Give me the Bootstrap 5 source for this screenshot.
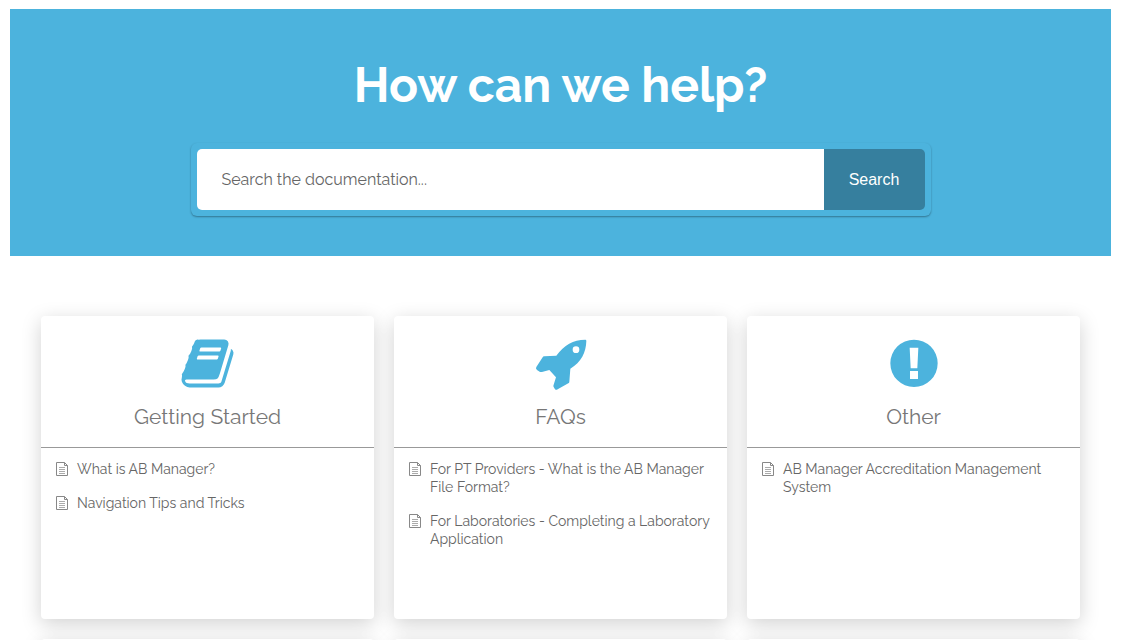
<!DOCTYPE html>
<html lang="en">
<head>
<meta charset="utf-8">
<meta name="viewport" content="width=device-width, initial-scale=1">
<title>How can we help?</title>
<link rel="stylesheet" href="https://cdn.jsdelivr.net/npm/bootstrap@5.3.0/dist/css/bootstrap.min.css">
<style>
:root { --kb-blue: #4cb3dd; --kb-teal: #367f9e; }
body { font-family: Raleway, Lato, sans-serif; color: #666; overflow-x: hidden; }
.kb-hero { background: var(--kb-blue); margin: 9px 11px 0 10px; padding: 46px 16px 40px; }
.kb-hero h1 { font-size: 48px; line-height: 60px; font-weight: 700; margin-bottom: 28px; }
.kb-search { max-width: 740px; padding: 6px; border-radius: 6px; box-shadow: 0 1px 2px rgba(0,0,0,.35); }
.kb-search .form-control { height: 61px; padding: 0 25px; border: 0; border-radius: 5px 0 0 5px; font-size: 16px; color: #666; }
.kb-search .form-control::placeholder { color: #666; opacity: 1; }
.kb-search .btn { width: 101px; border: 0; border-radius: 0 5px 5px 0; background: var(--kb-teal); color: #fff; font: 16px "Liberation Sans", sans-serif; }
.kb-grid { padding: 60px 42px 20px 41px; display: grid; grid-template-columns: repeat(3, minmax(0, 1fr)); gap: 20px; }
.kb-card { min-height: 303px; background: #fff; border-radius: 4px; box-shadow: 0 5px 20px rgba(0,0,0,.18); }
.kb-head { padding: 20px 16px 16px; border-bottom: 1px solid #999; }
.kb-head svg { width: 56px; height: 56px; fill: var(--kb-blue); }
.kb-head h2 { font-size: 21px; line-height: 28px; font-weight: 400; margin: 11px 0 0; color: #777; }
.kb-list { padding: 12px 14px; font-size: 14px; line-height: 18px; }
.kb-list a { color: #666; }
.kb-list svg { width: 14px; height: 14px; margin-top: 2px; fill: none; stroke: #888; }
@media (max-width: 767px) { .kb-grid { grid-template-columns: 1fr; padding: 32px 16px; } }
</style>
</head>
<body>
<svg class="d-none" aria-hidden="true">
  <symbol id="doc" viewBox="0 0 14 14"><path d="M1.500.5h8l3 3v10h-11zM9.500.5v3h3"/><path d="M4 5.500h6M4 7.500h6M4 9.500h6M4 11.500h6" stroke-opacity=".7"/></symbol>
</svg>
<header class="kb-hero text-center text-white">
  <h1>How can we help?</h1>
  <form class="kb-search d-flex mx-auto" role="search">
    <input class="form-control" type="search" placeholder="Search the documentation..." aria-label="Search the documentation">
    <button class="btn flex-shrink-0" type="submit">Search</button>
  </form>
</header>
<main class="kb-grid">
  <section class="kb-card">
    <div class="kb-head text-center">
      <svg class="d-block mx-auto" viewBox="-48 16 1792 1792" aria-hidden="true"><path d="M1639 478q40 57 18 129l-275 906q-19 64-76.500 107.500t-122.500 43.500h-923q-77 0-148.500-53.500t-99.500-131.500q-24-67-2-127 0-4 3-27t4-37q1-8-3-21.500t-3-19.500q2-11 8-21t16.500-23.500 16.500-23.500q23-38 45-91.500t30-91.500q3-10 .5-30t-.5-28q3-11 17-28t17-23q21-36 42-92t25-90q1-9-2.500-32t.5-28q4-13 22-30.500t22-22.500q19-26 42.500-84.500t27.500-96.500q1-8-3-25.500t-2-26.500q2-8 9-18t18-23 17-21q8-12 16.500-30.500t15-35 16-36 19.500-32 26.500-23.500 36-11.500 47.500 5.500l-1 3q38-9 51-9h761q74 0 114 56t18 130l-274 906q-36 119-71.500 153.500t-128.500 34.500h-869q-27 0-38 15-11 16-1 43 24 70 144 70h923q29 0 56-15.500t35-41.500l300-987q7-22 5-57 38 15 59 43zm-1064 2q-4 13 2 22.500t20 9.500h608q13 0 25.500-9.500t16.500-22.500l21-64q4-13-2-22.500t-20-9.500h-608q-13 0-25.500 9.500t-16.500 22.500zm-83 256q-4 13 2 22.500t20 9.500h608q13 0 25.500-9.500t16.500-22.500l21-64q4-13-2-22.500t-20-9.500h-608q-13 0-25.500 9.500t-16.500 22.500z"/></svg>
      <h2>Getting Started</h2>
    </div>
    <ul class="kb-list list-unstyled mb-0 d-flex flex-column gap-3">
      <li><a class="d-flex gap-2 text-decoration-none" href="#"><svg class="flex-shrink-0" aria-hidden="true"><use href="#doc"/></svg><span>What is AB Manager?</span></a></li>
      <li><a class="d-flex gap-2 text-decoration-none" href="#"><svg class="flex-shrink-0" aria-hidden="true"><use href="#doc"/></svg><span>Navigation Tips and Tricks</span></a></li>
    </ul>
  </section>
  <section class="kb-card">
    <div class="kb-head text-center">
      <svg class="d-block mx-auto" viewBox="54 33 168 168" aria-hidden="true"><path fill-rule="evenodd" d="M211 44q3 0 3 4c-1 35-15 63-48 83l-3 39q0 3-3 5l-32 18q-4 3-8 0l-4-7q-2-3 0-7l7-22-20-22-22 6q-4 1-7-1l-8-5q-5-4-2-9l18-28q2-4 6-4l36-2c24-33 50-47 87-48zM183 64a10 10 0 1 0 0 20 10 10 0 0 0 0-20z"/></svg>
      <h2>FAQs</h2>
    </div>
    <ul class="kb-list list-unstyled mb-0 d-flex flex-column gap-3">
      <li><a class="d-flex gap-2 text-decoration-none" href="#"><svg class="flex-shrink-0" aria-hidden="true"><use href="#doc"/></svg><span>For PT Providers - What is the AB Manager File Format?</span></a></li>
      <li><a class="d-flex gap-2 text-decoration-none" href="#"><svg class="flex-shrink-0" aria-hidden="true"><use href="#doc"/></svg><span>For Laboratories - Completing a Laboratory Application</span></a></li>
    </ul>
  </section>
  <section class="kb-card">
    <div class="kb-head text-center">
      <svg class="d-block mx-auto" viewBox="48 33 168 168" aria-hidden="true"><path fill-rule="evenodd" d="M132 44a71 71 0 1 0 0 142 71 71 0 0 0 0-142zM119 68h26l-3 62h-20zM120 138h24v24h-24z"/></svg>
      <h2>Other</h2>
    </div>
    <ul class="kb-list list-unstyled mb-0 d-flex flex-column gap-3">
      <li><a class="d-flex gap-2 text-decoration-none" href="#"><svg class="flex-shrink-0" aria-hidden="true"><use href="#doc"/></svg><span>AB Manager Accreditation Management System</span></a></li>
    </ul>
  </section>
  <section class="kb-card"></section>
  <section class="kb-card"></section>
  <section class="kb-card"></section>
</main>
<script src="https://cdn.jsdelivr.net/npm/bootstrap@5.3.0/dist/js/bootstrap.bundle.min.js"></script>
</body>
</html>
